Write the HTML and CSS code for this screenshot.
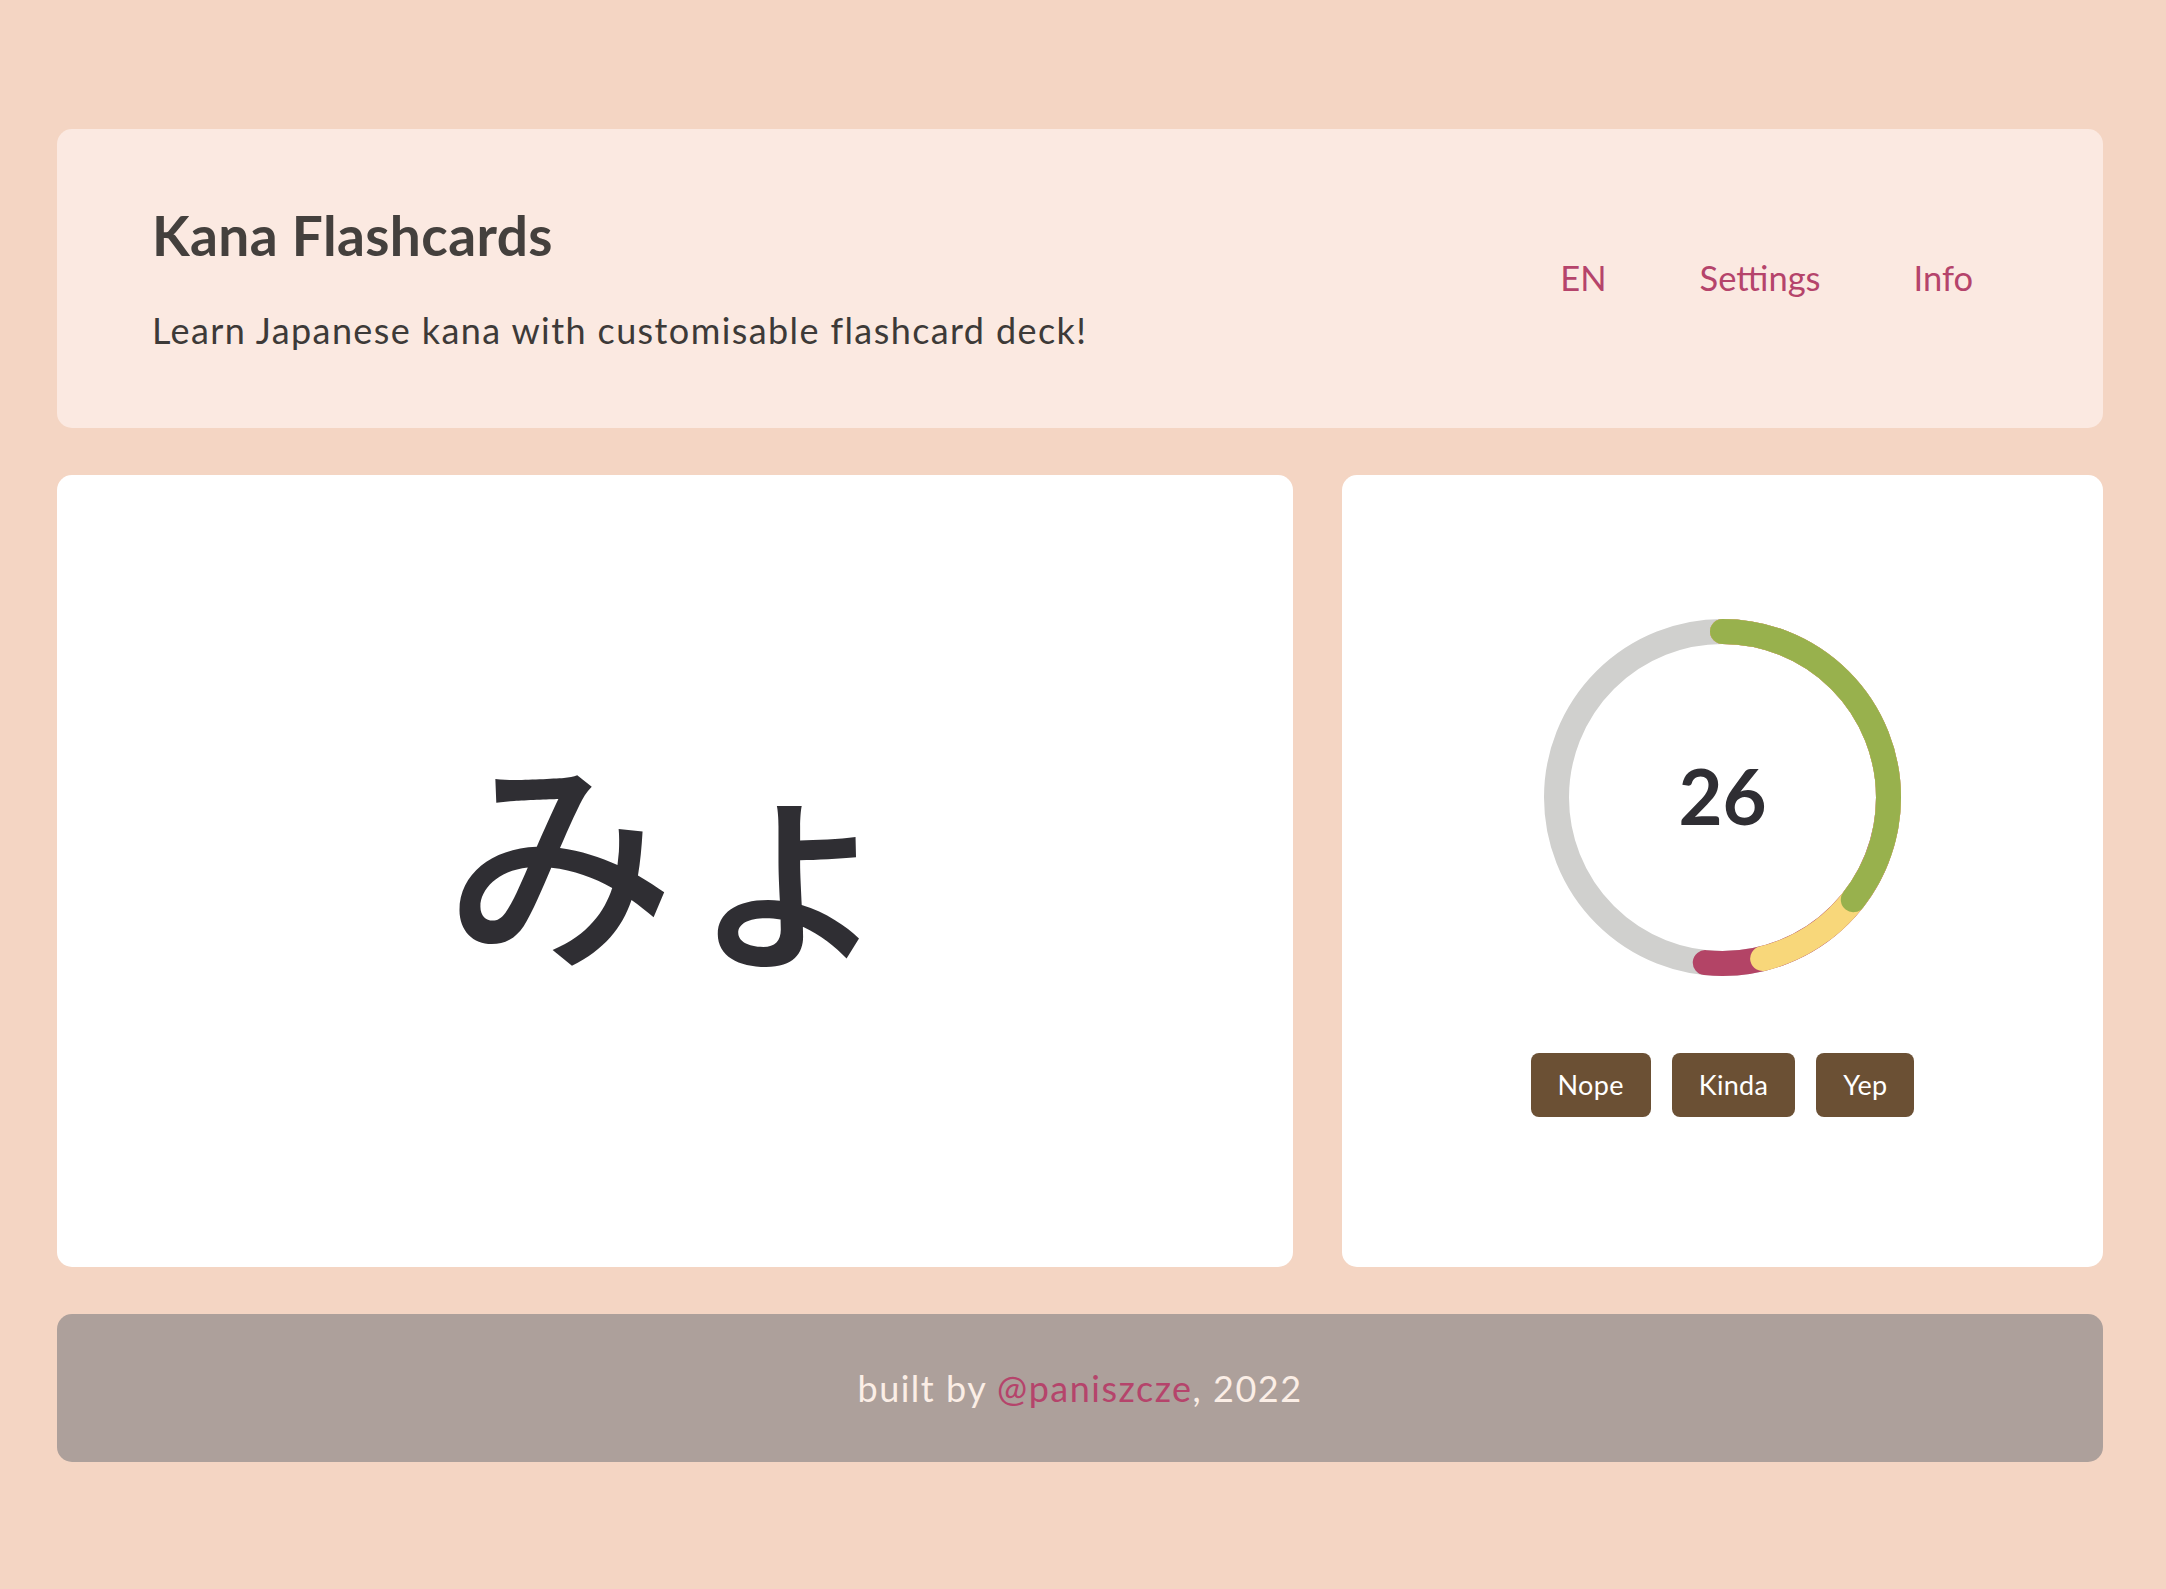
FILE: index.html
```html
<!DOCTYPE html>
<html lang="en">
<head>
<meta charset="utf-8">
<title>Kana Flashcards</title>
<link rel="stylesheet" href="styles.css">
</head>
<body>
<div class="page">
  <header class="header">
    <div class="brand">
      <h1 class="title">Kana Flashcards</h1>
      <p class="subtitle">Learn Japanese kana with customisable flashcard deck!</p>
    </div>
    <nav class="nav">
      <a class="nav-link" href="#">EN</a>
      <a class="nav-link" href="#">Settings</a>
      <a class="nav-link" href="#">Info</a>
    </nav>
  </header>
  <main class="main">
    <section class="card flashcard">
      <span class="kana" lang="ja">みょ</span>
    </section>
    <section class="card progress">
      <div class="ring">
        <svg class="ring-svg" width="357" height="357" viewBox="0 0 357 357">
          <g transform="rotate(-90 178.5 178.5)" fill="none" stroke-width="25" stroke-linecap="round">
            <circle cx="178.5" cy="178.5" r="166" stroke="#d0d0ce" stroke-linecap="butt"/>
            <circle cx="178.5" cy="178.5" r="166" stroke="#b34466" stroke-dasharray="538.6 2000"/>
            <circle cx="178.5" cy="178.5" r="166" stroke="#f8d77a" stroke-dasharray="480.7 2000"/>
            <circle cx="178.5" cy="178.5" r="166" stroke="#98b14d" stroke-dasharray="370.7 2000"/>
          </g>
        </svg>
        <span class="count">26</span>
      </div>
      <div class="buttons">
        <button class="btn">Nope</button>
        <button class="btn">Kinda</button>
        <button class="btn">Yep</button>
      </div>
    </section>
  </main>
  <footer class="footer">
    <p class="credit">built by <a class="credit-link" href="#">@paniszcze</a>, 2022</p>
  </footer>
</div>
</body>
</html>
```

FILE: styles.css
```css
html, body {
  margin: 0;
  padding: 0;
}
body {
  background: #f4d5c3;
  font-family: "Lato", "Noto Sans", sans-serif;
  color: #44403d;
}
.page {
  padding: 129px 63px 127px 57px;
  display: flex;
  flex-direction: column;
  gap: 47px;
}
.header {
  height: 299px;
  box-sizing: border-box;
  background: #fbe9e1;
  border-radius: 15px;
  padding: 0 130px 0 95px;
  display: flex;
  align-items: center;
  justify-content: space-between;
}
.brand {
  display: flex;
  flex-direction: column;
  margin-top: -2px;
}
.title {
  margin: 0;
  font-size: 55px;
  line-height: 64px;
  font-weight: 700;
  letter-spacing: 0.4px;
  color: #44403d;
}
.subtitle {
  margin: 41px 0 0;
  font-size: 36px;
  line-height: 44px;
  letter-spacing: 1.4px;
  color: #3d3a38;
}
.nav {
  display: flex;
  gap: 93px;
  align-items: center;
  margin-top: -2px;
}
.nav-link {
  font-size: 34.5px;
  color: #b5446b;
  text-decoration: none;
}
.main {
  display: grid;
  grid-template-columns: 1236fr 761fr;
  gap: 49px;
  height: 792px;
}
.card {
  background: #ffffff;
  border-radius: 15px;
}
.flashcard {
  display: flex;
  align-items: center;
  justify-content: center;
  padding-bottom: 42px;
  box-sizing: border-box;
}
.kana {
  font-family: "Noto Sans CJK JP", sans-serif;
  font-size: 230px;
  font-weight: 500;
  line-height: 1;
  color: #2f2e33;
}
.progress {
  display: flex;
  flex-direction: column;
  align-items: center;
  justify-content: center;
  gap: 77px;
  padding-bottom: 7px;
  box-sizing: border-box;
}
.ring {
  position: relative;
  width: 357px;
  height: 357px;
}
.ring-svg {
  display: block;
}
.count {
  position: absolute;
  inset: 0 0 3px 0;
  display: flex;
  align-items: center;
  justify-content: center;
  font-size: 76px;
  font-weight: 700;
  color: #2f2e33;
}
.buttons {
  display: flex;
  gap: 21px;
}
.btn {
  height: 64px;
  padding: 0 27px;
  border: none;
  border-radius: 8px;
  background: #6b5034;
  color: #ffffff;
  font-family: inherit;
  font-size: 27px;
  letter-spacing: 0.3px;
}
.footer {
  height: 148px;
  background: #ada09b;
  border-radius: 15px;
  display: flex;
  align-items: center;
  justify-content: center;
}
.credit {
  margin: 0;
  font-size: 36px;
  letter-spacing: 1.5px;
  color: #fbeee6;
}
.credit-link {
  color: #b5446b;
  text-decoration: none;
}
```
